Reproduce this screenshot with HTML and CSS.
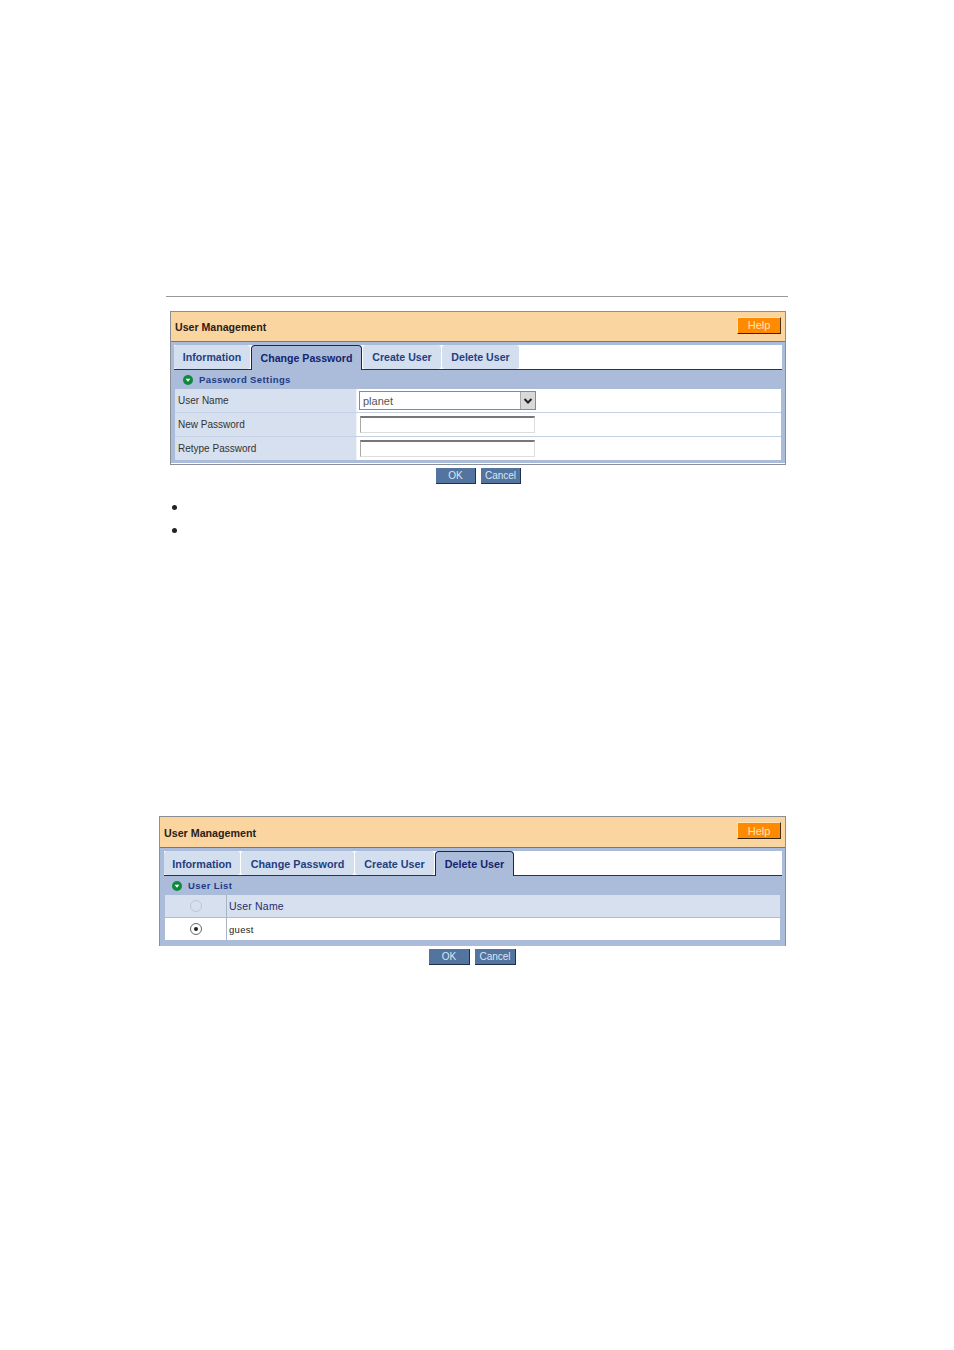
FILE: index.html
```html
<!DOCTYPE html>
<html lang="en">
<head>
  <meta charset="UTF-8" />
  <title>User Management</title>
  <link rel="stylesheet" href="styles.css">
</head>
<body>
  <hr class="rule">

  <div class="panel panel-password">
    <div class="panel-head">
      <span class="panel-title">User Management</span>
      <button class="help-btn">Help</button>
    </div>
    <div class="panel-body">
      <div class="tabs">
        <a class="tab tab-info">Information</a>
        <a class="tab tab-change active">Change Password</a>
        <a class="tab tab-create">Create User</a>
        <a class="tab tab-delete">Delete User</a>
      </div>
      <div class="section-title">
        <svg class="section-icon" viewBox="0 0 10 10"><circle cx="5" cy="5" r="5" fill="#0f8a3c"/><path d="M2.6 3.8H7.4L5 6.8Z" fill="#fff"/></svg>
        Password Settings
      </div>
      <div class="form-table">
        <div class="form-row">
          <div class="form-label">User Name</div>
          <div class="form-value">
            <div class="select-box">
              <span>planet</span>
              <span class="select-arrow"><svg viewBox="0 0 10 10" width="10" height="10"><path d="M1.5 3 5 6.5 8.5 3" fill="none" stroke="#222" stroke-width="2"/></svg></span>
            </div>
          </div>
        </div>
        <div class="form-row">
          <div class="form-label">New Password</div>
          <div class="form-value"><input class="text-input" type="password"></div>
        </div>
        <div class="form-row">
          <div class="form-label">Retype Password</div>
          <div class="form-value"><input class="text-input" type="password"></div>
        </div>
      </div>
    </div>
  </div>
  <div class="actions actions-password">
    <button class="action-btn">OK</button>
    <button class="action-btn">Cancel</button>
  </div>

  <ul class="bullets">
    <li>&nbsp;</li>
    <li>&nbsp;</li>
  </ul>

  <div class="panel panel-delete">
    <div class="panel-head">
      <span class="panel-title">User Management</span>
      <button class="help-btn">Help</button>
    </div>
    <div class="panel-body">
      <div class="tabs">
        <a class="tab tab-info">Information</a>
        <a class="tab tab-change">Change Password</a>
        <a class="tab tab-create">Create User</a>
        <a class="tab tab-delete active">Delete User</a>
      </div>
      <div class="section-title">
        <svg class="section-icon" viewBox="0 0 10 10"><circle cx="5" cy="5" r="5" fill="#0f8a3c"/><path d="M2.6 3.8H7.4L5 6.8Z" fill="#fff"/></svg>
        User List
      </div>
      <div class="user-table">
        <div class="user-row user-head">
          <div class="user-pick"><span class="radio radio-off"></span></div>
          <div class="user-name">User Name</div>
        </div>
        <div class="user-row">
          <div class="user-pick"><span class="radio radio-on"></span></div>
          <div class="user-name">guest</div>
        </div>
      </div>
    </div>
  </div>
  <div class="actions actions-delete">
    <button class="action-btn">OK</button>
    <button class="action-btn">Cancel</button>
  </div>
</body>
</html>
```

FILE: styles.css
```css
body {
  margin: 0;
  height: 1350px;
  background: #fff;
  font-family: "Liberation Sans", Arial, sans-serif;
  color: #222;
  overflow: hidden;
}

.rule {
  width: 622px;
  height: 1px;
  margin: 296px 0 0 166px;
  border: none;
  background: #999;
}

.panel {
  border: 1px solid #8a8f96;
  box-sizing: border-box;
}

.panel-password {
  width: 616px;
  height: 154px;
  margin: 14px 0 0 170px;
}

.panel-delete {
  width: 627px;
  height: 130px;
  margin: 275px 0 0 159px;
}

.panel-head {
  display: flex;
  align-items: center;
  justify-content: space-between;
  height: 29px;
  padding: 0 4px;
  background: #fad59f;
  border-bottom: 1px solid #777;
}

.panel-delete .panel-head {
  height: 30px;
}

.panel-title {
  font-size: 10.6px;
  font-weight: bold;
  color: #2a2018;
}

.panel-delete .panel-title {
  margin-top: 2px;
  font-size: 10.7px;
}

.help-btn {
  width: 44px;
  height: 17px;
  margin-bottom: 3px;
  padding: 0;
  background: #ff8a00;
  border: 1px solid;
  border-color: #ffe3ba #4a3210 #33240c #ffe3ba;
  color: #ffe6b8;
  font-family: inherit;
  font-size: 11px;
}

.panel-body {
  padding: 3px 3px 0;
  height: 121px;
  background: #aabcd9;
  box-sizing: border-box;
}

.panel-delete .panel-body {
  height: 98px;
  padding-left: 4px;
}

.tabs {
  display: flex;
  gap: 1px;
  height: 25px;
  background: #fff;
  border-bottom: 1px solid #1c2f80;
  box-sizing: border-box;
}

.tab {
  display: flex;
  align-items: center;
  justify-content: center;
  height: 24px;
  background: #d3deef;
  border-radius: 3px;
  color: #24407f;
  font-size: 10.6px;
  font-weight: bold;
  box-sizing: border-box;
}

.panel-delete .tab {
  padding-top: 1px;
  font-size: 10.8px;
}

.tab-info {
  width: 76px;
}

.tab-change {
  width: 111px;
}

.tab-create {
  width: 78px;
}

.tab-delete {
  width: 77px;
}

.panel-delete .tab-change {
  width: 113px;
}

.panel-delete .tab-create {
  width: 79px;
}

.panel-delete .tab-delete {
  width: 79px;
}

.tab.active,
.panel-delete .tab.active {
  height: 25px;
  padding-top: 0;
  background: #aabcd9;
  border: 1px solid #14246e;
  border-bottom: none;
  border-radius: 4px 4px 0 0;
  color: #14246e;
}

.section-title {
  display: flex;
  align-items: center;
  gap: 6px;
  height: 19px;
  padding-left: 9px;
  color: #1d3a8a;
  font-size: 9.5px;
  font-weight: bold;
  letter-spacing: 0.4px;
}

.panel-delete .section-title {
  padding-left: 8px;
}

.section-icon {
  width: 10px;
  height: 10px;
}

.form-table {
  margin: 0 1px;
  background: #c3d0e6;
}

.form-row {
  display: flex;
  height: 24px;
  border-bottom: 1px solid #c3d0e6;
  box-sizing: border-box;
}

.form-row:last-child {
  height: 23px;
  border-bottom: none;
}

.form-label {
  display: flex;
  align-items: center;
  width: 182px;
  padding-left: 3px;
  background: #d7e0ef;
  border-right: 1px solid #f2f4f8;
  font-size: 10px;
  color: #333;
  box-sizing: border-box;
}

.form-value {
  flex: 1;
  display: flex;
  align-items: center;
  padding-left: 2px;
  background: #fff;
}

.select-box {
  display: flex;
  align-items: center;
  justify-content: space-between;
  width: 177px;
  height: 19px;
  padding-left: 3px;
  border: 1px solid #8a8a8a;
  font-size: 11px;
  color: #555;
  box-sizing: border-box;
}

.select-arrow {
  display: flex;
  align-items: center;
  justify-content: center;
  width: 15px;
  height: 17px;
  background: #d9d9d9;
  border-left: 1px solid #aaa;
  box-sizing: border-box;
}

.text-input {
  width: 175px;
  height: 17px;
  margin-left: 1px;
  padding: 0;
  border: 1px solid #ddd;
  border-top: 2px solid #777;
  border-left-color: #aaa;
  box-sizing: border-box;
}

.actions {
  display: flex;
  gap: 5px;
}

.actions-password {
  margin: 3px 0 0 436px;
}

.actions-delete {
  margin: 3px 0 0 429px;
}

.action-btn {
  width: 40px;
  height: 16px;
  padding: 0;
  background: #52749f;
  border: none;
  border-right: 1px solid #1e3050;
  border-bottom: 1px solid #1e3050;
  color: #dde6f2;
  font-family: inherit;
  font-size: 10px;
  box-sizing: border-box;
}

.actions-delete .action-btn {
  width: 41px;
}

.bullets {
  margin: 11px 0 0;
  padding-left: 188px;
}

.bullets li {
  height: 23px;
  font-size: 16px;
  line-height: 23px;
}

.user-table {
  margin: 0 2px 0 1px;
}

.user-row {
  display: flex;
  height: 22px;
  background: #fff;
}

.user-head {
  height: 23px;
  background: #d7e0ef;
  border-bottom: 1px solid #aabcd9;
  color: #1d2f70;
  box-sizing: border-box;
}

.user-pick {
  display: flex;
  align-items: center;
  justify-content: center;
  width: 62px;
  border-right: 1px solid #aab4c4;
  box-sizing: border-box;
}

.user-name {
  display: flex;
  align-items: center;
  padding-left: 2px;
  font-size: 9.5px;
  letter-spacing: 0.3px;
}

.user-head .user-name {
  font-size: 10.5px;
  letter-spacing: 0.2px;
}

.radio {
  position: relative;
  width: 12px;
  height: 12px;
  border-radius: 50%;
  box-sizing: border-box;
}

.radio-off {
  border: 1px solid #bcc6d6;
}

.radio-on {
  border: 1px solid #666;
}

.radio-on::after {
  content: "";
  position: absolute;
  top: 3px;
  left: 3px;
  width: 4px;
  height: 4px;
  border-radius: 50%;
  background: #222;
}
```
